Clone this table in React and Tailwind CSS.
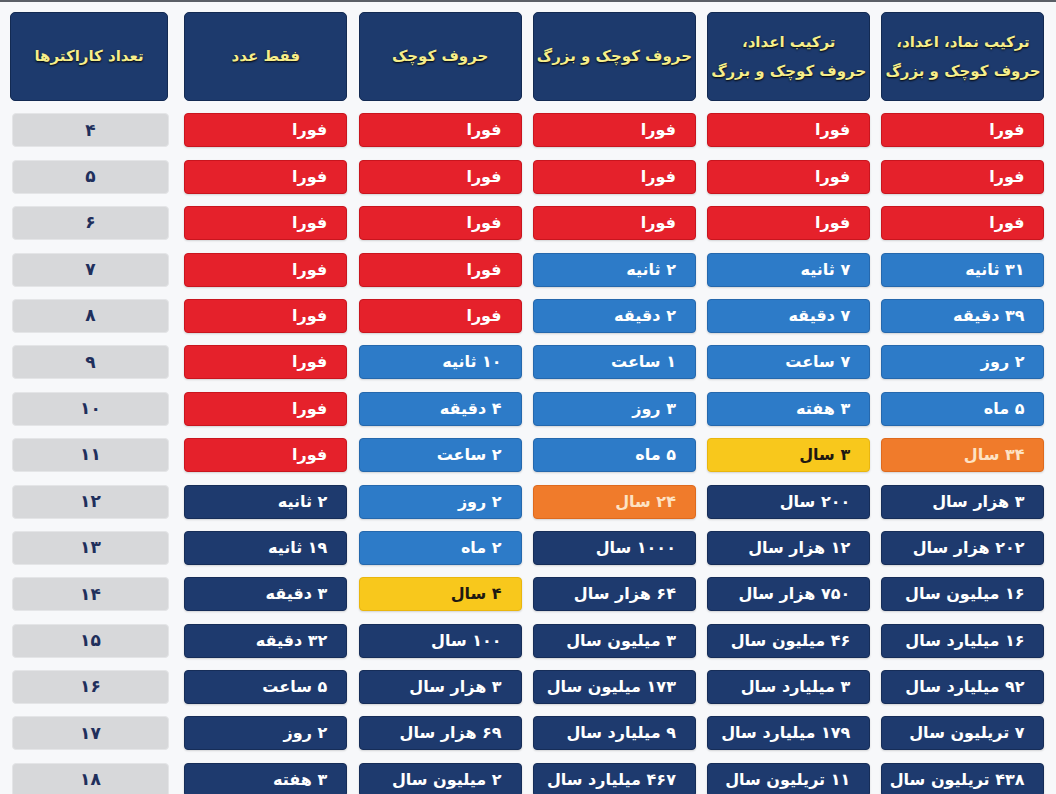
import React from "react";

const C = {
  r: "bg-[#e5212b] border border-[#c9151e] text-white",
  b: "bg-[#2d7bc8] border border-[#2568ad] text-white",
  n: "bg-[#1e3a6e] border border-[#162d58] text-white",
  y: "bg-[#f8c81c] border border-[#e9b60e] text-[#1f1a12]",
  o: "bg-[#f07b2b] border border-[#de6a1e] text-[#fde2c4]",
};

const F = ["r", "فورا"];
const rows = [
  ["۴", [F, F, F, F, F]],
  ["۵", [F, F, F, F, F]],
  ["۶", [F, F, F, F, F]],
  ["۷", [F, F, ["b", "۲ ثانیه"], ["b", "۷ ثانیه"], ["b", "۳۱ ثانیه"]]],
  ["۸", [F, F, ["b", "۲ دقیقه"], ["b", "۷ دقیقه"], ["b", "۳۹ دقیقه"]]],
  ["۹", [F, ["b", "۱۰ ثانیه"], ["b", "۱ ساعت"], ["b", "۷ ساعت"], ["b", "۲ روز"]]],
  ["۱۰", [F, ["b", "۴ دقیقه"], ["b", "۳ روز"], ["b", "۳ هفته"], ["b", "۵ ماه"]]],
  ["۱۱", [F, ["b", "۲ ساعت"], ["b", "۵ ماه"], ["y", "۳ سال"], ["o", "۳۴ سال"]]],
  ["۱۲", [["n", "۲ ثانیه"], ["b", "۲ روز"], ["o", "۲۴ سال"], ["n", "۲۰۰ سال"], ["n", "۳ هزار سال"]]],
  ["۱۳", [["n", "۱۹ ثانیه"], ["b", "۲ ماه"], ["n", "۱۰۰۰ سال"], ["n", "۱۲ هزار سال"], ["n", "۲۰۲ هزار سال"]]],
  ["۱۴", [["n", "۳ دقیقه"], ["y", "۴ سال"], ["n", "۶۴ هزار سال"], ["n", "۷۵۰ هزار سال"], ["n", "۱۶ میلیون سال"]]],
  ["۱۵", [["n", "۳۲ دقیقه"], ["n", "۱۰۰ سال"], ["n", "۳ میلیون سال"], ["n", "۴۶ میلیون سال"], ["n", "۱۶ میلیارد سال"]]],
  ["۱۶", [["n", "۵ ساعت"], ["n", "۳ هزار سال"], ["n", "۱۷۳ میلیون سال"], ["n", "۳ میلیارد سال"], ["n", "۹۲ میلیارد سال"]]],
  ["۱۷", [["n", "۲ روز"], ["n", "۶۹ هزار سال"], ["n", "۹ میلیارد سال"], ["n", "۱۷۹ میلیارد سال"], ["n", "۷ تریلیون سال"]]],
  ["۱۸", [["n", "۳ هفته"], ["n", "۲ میلیون سال"], ["n", "۴۶۷ میلیارد سال"], ["n", "۱۱ تریلیون سال"], ["n", "۴۳۸ تریلیون سال"]]],
];

const headers = [
  ["تعداد کاراکترها"],
  ["فقط عدد"],
  ["حروف کوچک"],
  ["حروف کوچک و بزرگ"],
  ["ترکیب اعداد،", "حروف کوچک و بزرگ"],
  ["ترکیب نماد، اعداد،", "حروف کوچک و بزرگ"],
];

export default function App() {
  return (
    <div
      className="w-[1056px] h-[794px] overflow-hidden bg-[#f7f8fa] border-t-[2px] border-[#5b5f66]"
      style={{ fontFamily: '"DejaVu Sans", "Noto Sans", sans-serif' }}
    >
      <div className="ml-[10px] mt-[10px] grid grid-cols-[163px_163px_163px_163px_163px_163px] grid-rows-[89px] auto-rows-[34px] gap-x-[11.3px] gap-y-[12.4px]">
        {headers.map((h, i) => (
          <div
            key={i}
            dir="rtl"
            className={`${i === 0 ? "w-[158px]" : ""} h-[89px] rounded-[5px] bg-[#1d3a6d] border border-[#132a52] flex flex-col items-center justify-center text-[#f6ee8a] font-bold text-[15px] leading-[29px] [text-shadow:0_1px_2px_#000]`}
          >
            {h.map((l, j) => (
              <div key={j}>{l}</div>
            ))}
          </div>
        ))}
        {rows.map(([count, cells], ri) => (
          <React.Fragment key={ri}>
            <div className="w-[157px] ml-[2px] h-[34px] rounded-[4px] bg-[#d7d8da] border border-[#e4e5e7] flex items-center justify-center text-[#1f2f5c] font-bold text-[17px]">
              {count}
            </div>
            {cells.map(([c, t], ci) => (
              <div
                key={ci}
                dir="rtl"
                className={`${C[c]} h-[34px] rounded-[4px] flex items-center pr-[19px] font-bold text-[16px] shadow-[0_1px_2px_rgba(0,0,0,0.15)]`}
              >
                {t}
              </div>
            ))}
          </React.Fragment>
        ))}
      </div>
    </div>
  );
}
